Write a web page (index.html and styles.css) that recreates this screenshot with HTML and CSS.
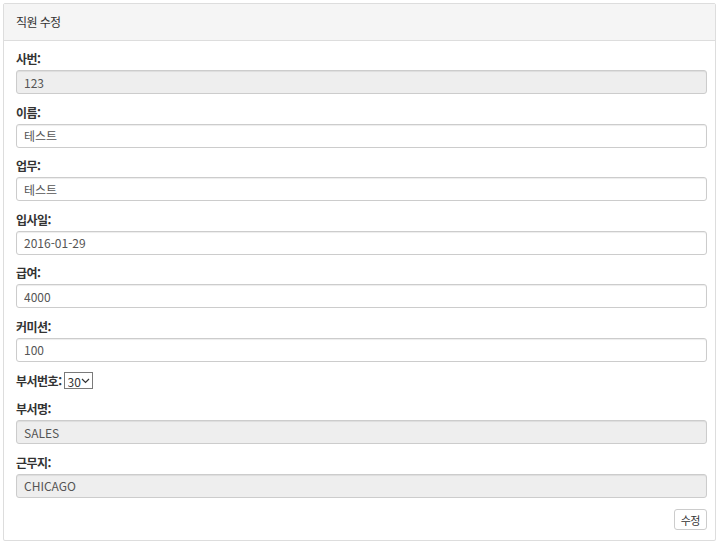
FILE: index.html
```html
<!DOCTYPE html>
<html lang="ko">

<head>
    <meta charset="UTF-8">
    <meta name="viewport" content="width=device-width, initial-scale=1.0">
    <title>직원 수정</title>

    <link rel="stylesheet" href="styles.css">
</head>

<body>

    <div class="panel">
        <div class="panel-heading">직원 수정</div>

        <form class="panel-body">
            <div class="form-group">
                <label for="empno">사번:</label>
                <input type="text" id="empno" class="form-control" value="123" disabled>
            </div>
            <div class="form-group">
                <label for="ename">이름:</label>
                <input type="text" id="ename" class="form-control" value="테스트">
            </div>
            <div class="form-group">
                <label for="job">업무:</label>
                <input type="text" id="job" class="form-control" value="테스트">
            </div>
            <div class="form-group">
                <label for="hiredate">입사일:</label>
                <input type="text" id="hiredate" class="form-control" value="2016-01-29">
            </div>
            <div class="form-group">
                <label for="sal">급여:</label>
                <input type="text" id="sal" class="form-control" value="4000">
            </div>
            <div class="form-group">
                <label for="comm">커미션:</label>
                <input type="text" id="comm" class="form-control" value="100">
            </div>
            <div class="form-group inline">
                <label for="deptno">부서번호:</label>
                <span class="select-wrap">
                    <select id="deptno">
                        <option>10</option>
                        <option>20</option>
                        <option selected>30</option>
                        <option>40</option>
                    </select>
                    <svg class="chevron" width="9" height="6" viewBox="0 0 9 6">
                        <path d="M1 1 L4.5 4.5 L8 1" fill="none" stroke="#333" stroke-width="1.2"/>
                    </svg>
                </span>
            </div>
            <div class="form-group">
                <label for="dname">부서명:</label>
                <input type="text" id="dname" class="form-control" value="SALES" disabled>
            </div>
            <div class="form-group">
                <label for="loc">근무지:</label>
                <input type="text" id="loc" class="form-control" value="CHICAGO" disabled>
            </div>

            <div class="actions">
                <button type="button" class="btn">수정</button>
            </div>
        </form>
    </div>

</body>

</html>
```

FILE: styles.css
```css
body {
    font-family: "Noto Sans CJK KR", "Noto Sans", sans-serif;
    font-size: 12px;
    color: #333;
    margin: 3px 4px 4px 3px;
    background-color: white;
}

.panel {
    border: 1px solid #ddd;
    border-radius: 2px;
    box-shadow: 0 1px 1px rgba(0, 0, 0, 0.05);
}

.panel-heading {
    height: 36px;
    line-height: 36px;
    padding: 0 12px;
    background-color: #f5f5f5;
    border-bottom: 1px solid #ddd;
    color: #333;
    letter-spacing: -0.6px;
}

.panel-body {
    padding: 11px 8px 10px 12px;
    margin: 0;
}

.form-group {
    display: flex;
    flex-direction: column;
    gap: 4px;
    margin-bottom: 11.5px;
}

.form-group label {
    font-weight: bold;
    line-height: 14px;
    height: 14px;
    letter-spacing: -0.5px;
}

.form-control {
    box-sizing: border-box;
    width: 100%;
    height: 24px;
    padding: 0 7px;
    font-family: inherit;
    font-size: 12px;
    color: #555;
    background-color: white;
    border: 1px solid #ccc;
    border-radius: 3px;
    box-shadow: inset 0 1px 1px rgba(0, 0, 0, 0.075);
    margin: 0;
}

.form-control:disabled {
    background-color: #eee;
    color: #555;
}

.form-group.inline {
    flex-direction: row;
    align-items: center;
    gap: 2px;
    margin-top: -1px;
    margin-bottom: 13px;
}

.select-wrap {
    position: relative;
    display: inline-block;
}

.select-wrap select {
    appearance: none;
    -webkit-appearance: none;
    box-sizing: border-box;
    width: 29px;
    height: 17px;
    padding: 0 0 0 3px;
    font-family: inherit;
    font-size: 12px;
    color: #333;
    background-color: white;
    border: 1px solid #7a7a7a;
    border-radius: 0;
    display: block;
}

.chevron {
    position: absolute;
    right: 3px;
    top: 6px;
    pointer-events: none;
}

.actions {
    display: flex;
    justify-content: flex-end;
    margin-top: 11px;
}

.btn {
    height: 21px;
    padding: 0 6px;
    font-family: inherit;
    font-size: 11px;
    color: #333;
    background-color: white;
    border: 1px solid #ccc;
    border-radius: 3px;
    letter-spacing: -0.5px;
    cursor: pointer;
}
```
